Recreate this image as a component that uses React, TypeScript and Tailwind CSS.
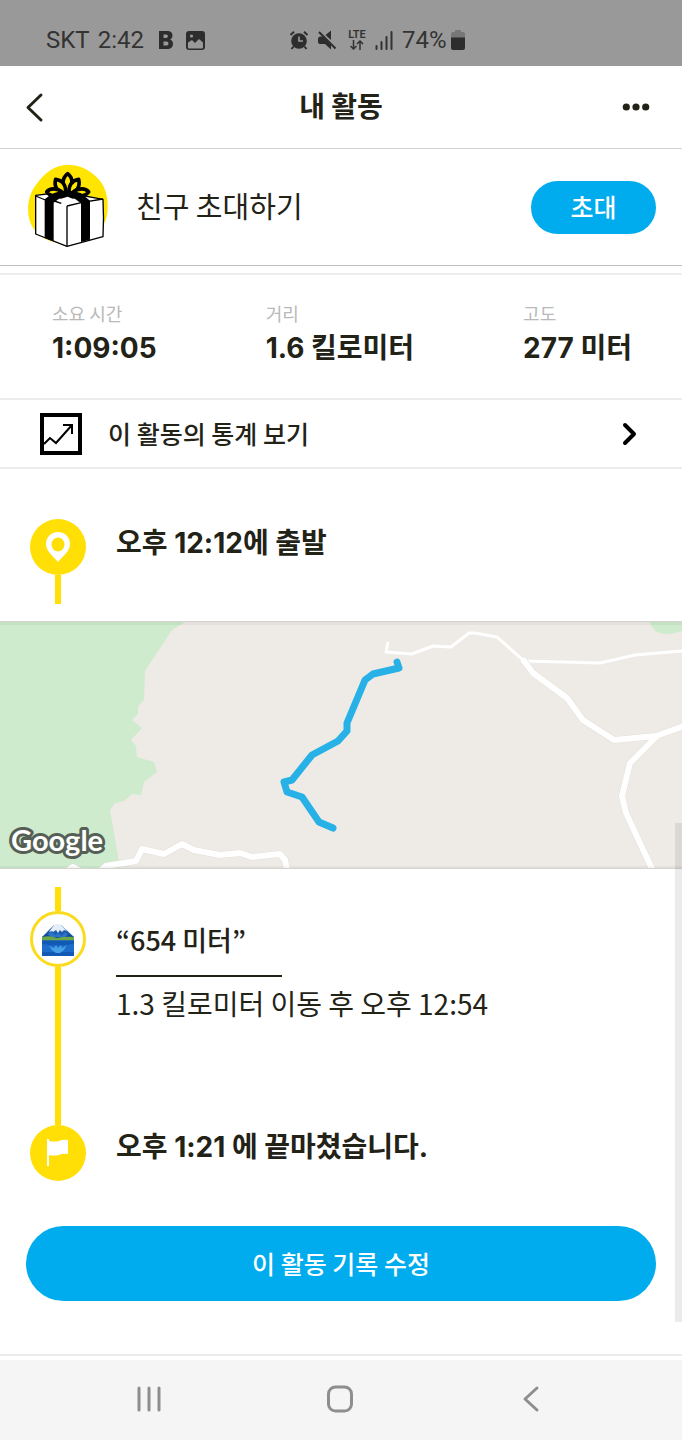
import type { ReactNode } from "react";

const stats = [
  { label: "소요 시간", value: "1:09:05" },
  { label: "거리", value: "1.6 킬로미터" },
  { label: "고도", value: "277 미터" },
];

const StatusBar = () => {
  return (
    <div className="flex h-[66px] items-center bg-[#999999] pt-[14px] pl-[46px] font-['Roboto',sans-serif] text-2xl text-[#333333]">
      <div className="flex w-[243px] items-center">
        <span>SKT</span>
        <span className="ml-2">2:42</span>
        <svg className="ml-[15px] h-[18px] w-[14px]" viewBox="0 0 14 18" aria-hidden="true">
          <path
            fill="#2d2d2d"
            fillRule="evenodd"
            d="M0 0h8.500c3.200 0 5 1.700 5 4.500 0 1.900-1 3.200-2.300 3.900 1.700.6 2.800 2.200 2.800 4.300 0 3.300-2.200 5.300-5.800 5.300H0zM4.500 3.500v3.400h2.700c2.300 0 2.300-3.400 0-3.400zM4.500 10.400v4h3.100c2.500 0 2.500-4 0-4z"
          />
        </svg>
        <svg className="ml-[13px] h-[19px] w-[19px]" viewBox="0 0 19 19" aria-hidden="true">
          <rect width="19" height="19" rx="3" fill="#2d2d2d" />
          <path
            fill="#999999"
            d="M2 11.500 6 9l3 3 4-4 4 3.500v5a1 1 0 0 1-1 1H3a1 1 0 0 1-1-1z"
          />
          <circle cx="5.500" cy="5" r="1.600" fill="#999999" />
        </svg>
      </div>
      <div className="flex items-center">
        <svg className="h-5 w-5" viewBox="0 0 20 20" aria-hidden="true">
          <circle cx="10" cy="11" r="7.800" fill="#2d2d2d" />
          <path
            d="M1.500 5 5 1.800M18.500 5 15 1.800M4.500 16.500 2.500 19M15.500 16.500l2 2.500"
            stroke="#2d2d2d"
            strokeWidth="2"
          />
          <path d="M10 6.500V11h4" fill="none" stroke="#999999" strokeWidth="1.700" />
        </svg>
        <svg className="ml-2 h-5 w-5" viewBox="0 0 20 20" aria-hidden="true">
          <path
            fill="#2d2d2d"
            d="M1 9c0-1.500 1-2.500 2.500-2.500H6l8 8.500v4.500L8 14H3a2 2 0 0 1-2-2zM8.500 5 14 .5V10z"
          />
          <path d="m2 2 16.500 16.500" stroke="#2d2d2d" strokeWidth="2" />
        </svg>
        <div className="ml-[10px] flex h-5 w-5 flex-col items-center text-[11px] leading-[10px] font-semibold">
          <span>LTE</span>
          <svg className="h-[10px] w-4" viewBox="0 0 16 10" aria-hidden="true">
            <path
              d="M4.500 0v9M1.500 6l3 3 3-3M11 10V1M8 4l3-3 3 3"
              fill="none"
              stroke="#333333"
              strokeWidth="1.500"
            />
          </svg>
        </div>
        <svg className="ml-[7px] h-5 w-5" viewBox="0 0 20 20" aria-hidden="true">
          <path
            d="M2.500 16v3M7.500 12v7M12.500 7v12M17.500 2v17"
            stroke="#333333"
            strokeWidth="2"
            strokeLinecap="round"
          />
        </svg>
        <span className="ml-2">74%</span>
        <svg className="ml-1 h-5 w-[14px]" viewBox="0 0 14 20" aria-hidden="true">
          <path
            fill="#777777"
            d="M4 0h6v2h2a2 2 0 0 1 2 2v4H0V4a2 2 0 0 1 2-2h2z"
          />
          <path fill="#2d2d2d" d="M0 7.500h14V18a2 2 0 0 1-2 2H2a2 2 0 0 1-2-2z" />
        </svg>
      </div>
    </div>
  );
};

const Header = () => {
  return (
    <header className="flex h-[83px] items-center justify-between border-b border-[#d2d2d2] pr-8 pl-6">
      <button type="button" aria-label="뒤로" className="w-8">
        <svg className="h-8 w-5" viewBox="0 0 20 32" aria-hidden="true">
          <path
            d="M17 4 4 16.500 17 29"
            fill="none"
            stroke="#232217"
            strokeWidth="3"
            strokeLinecap="round"
            strokeLinejoin="round"
          />
        </svg>
      </button>
      <h1 className="pb-1 pl-2 text-[28px] font-bold">내 활동</h1>
      <button type="button" aria-label="더 보기" className="flex w-8 justify-end">
        <svg className="h-8 w-8" viewBox="0 0 32 32" aria-hidden="true">
          <g fill="#232217">
            <circle cx="8.300" cy="16" r="3.600" />
            <circle cx="18" cy="16" r="3.600" />
            <circle cx="27.700" cy="16" r="3.600" />
          </g>
        </svg>
      </button>
    </header>
  );
};

const Gift = () => {
  return (
    <svg className="h-[85px] w-[83px]" viewBox="81 42 249 255" aria-hidden="true">
      <path
        fill="#ffe500"
        d="M206 44c38 1 72 20 95 50 20 26 26 65 20 100-6 42-45 84-115 86-68 2-108-29-119-76-7-36 0-71 20-98 25-37 60-63 99-62z"
      />
      <path
        fill="#fff"
        stroke="#000"
        strokeWidth="4"
        strokeLinejoin="round"
        d="m107 136 83-10 119 22c2 38 2 73 0 112l-108 29-94-37z"
      />
      <path
        d="M107 138 136 150M201 168l46-11 62-10M201 168v120"
        fill="none"
        stroke="#000"
        strokeWidth="4"
      />
      <path fill="#000" d="m134 148 24-18 30 8-27 20v116l-27-10z" />
      <path fill="#000" d="m213 138 30-8 27 22v117l-27 7V160z" />
      <path d="M163 153 184 160" fill="none" stroke="#000" strokeWidth="4" />
      <g fill="#ffe500" stroke="#000" strokeWidth="11" strokeLinejoin="round">
        <path d="M201 130c-17-23-15-46 2-59 17 13 18 36-2 59z" />
        <path d="M196 132c-24-5-35-22-29-44 22 3 33 19 29 44z" />
        <path d="M208 132c-4-25 7-41 28-44 5 22-5 38-28 44z" />
        <path d="M193 134c-22 9-43 5-53-8 12-15 40-11 53 8z" />
        <path d="M213 134c12-19 41-23 53-8-10 13-31 17-53 8z" />
      </g>
      <path d="M160 130q42-17 84 0l6 10-32 6-15-6-20 6-28-4z" />
    </svg>
  );
};

const InviteBanner = () => {
  return (
    <section className="flex h-[117px] items-center border-b border-[#bfbfbf] pr-[26px] pb-[2px] pl-[27px]">
      <Gift />
      <p className="ml-[26px] flex-1 text-[29px]">친구 초대하기</p>
      <button
        type="button"
        className="mt-[2px] h-[53px] w-[125px] rounded-full bg-[#00acee] pb-[2px] text-[25px] leading-[51px] font-medium text-white"
      >
        초대
      </button>
    </section>
  );
};

const RouteMap = () => {
  return (
    <figure aria-label="활동 경로 지도" className="border-y border-[#d5d3cd]">
      <svg
        className="block h-[246px] w-full"
        viewBox="0 622 682 246"
        preserveAspectRatio="xMidYMid slice"
      >
        <path fill="#eeebe6" d="M0 621h682v248H0z" />
        <path
          fill="#ceebcd"
          d="M0 621h187l-15 9-27 41-1 29-6 6v8l-6 6 10 8-11 12 5 6 1 11 17 5 3 10-13 10-3 13-9-1-8 7-9 2-5 7 9 52v7H0z"
        />
        <path fill="#ceebcd" d="M650 621q2 13 17 13 8 0 15-3v-10z" />
        <g fill="none" stroke="#fff" strokeLinejoin="round">
          <path
            strokeWidth="3"
            d="m388 642-2 10 26 2 21-8 18 1 18-14h6l22 4 27 24 76 2 35-8 47-4"
          />
          <g stroke="#e2dfd9" strokeWidth="7">
            <path d="m524 661 9 12 34 25 16 22 31 20 42-4 28-10M656 737l-26 26-8 33 4 17 28 60" />
            <path d="m99 872 7-6 30-5 6-12 22 5 18-10 12 6 26 5 20-2 12 4 28-3 5 6 3 14M66 872l7-5 9 5" />
          </g>
          <g strokeWidth="6" strokeLinecap="round">
            <path d="m524 661 9 12 34 25 16 22 31 20 42-4 28-10M656 737l-26 26-8 33 4 17 28 60" />
            <path d="m99 872 7-6 30-5 6-12 22 5 18-10 12 6 26 5 20-2 12 4 28-3 5 6 3 14M66 872l7-5 9 5" />
          </g>
        </g>
        <path fill="#000" fillOpacity="0.04" d="M0 622h682v3H0zM0 866h682v2H0z" />
        <path
          fill="none"
          stroke="#28b1e7"
          strokeWidth="7"
          strokeLinecap="round"
          strokeLinejoin="round"
          d="m397 662 2 6-26 6-8 6-18 43v8l-9 10-26 14-20 25-8 2 3 10 15 5 17 25 14 6"
        />
        <text
          x="11"
          y="851"
          fill="#fff"
          stroke="#555f55"
          strokeWidth="6"
          strokeLinejoin="round"
          paintOrder="stroke"
          className="font-['Lato',sans-serif] text-[29px] font-bold"
        >
          Google
        </text>
      </svg>
    </figure>
  );
};

const Stem = ({ className }: { className: string }) => {
  return <div className={`w-[6px] bg-[#ffdf06] ${className}`}></div>;
};

const Dot = ({ children }: { children: ReactNode }) => {
  return (
    <div className="flex h-14 w-14 items-center justify-center rounded-full bg-[#ffdf06]">
      {children}
    </div>
  );
};

const Mountain = () => {
  return (
    <svg className="mt-[2px] h-[32px] w-[32px]" viewBox="0 0 32 32" aria-hidden="true">
      <path fill="#1f5cae" d="M0 13 12 1h7l13 12v4H0z" />
      <path fill="#2a74c9" d="m9 7 4 4 3-2 4 3 3-4 5 5H4z" />
      <path fill="#e3eef8" d="M12 1q4-2 7 0l6 6-3-1-2 2-2-2-2 3-2-3-3 2-1-1-3 1z" />
      <path fill="#17459c" d="m0 13 5-3 4 3h14l4-3 5 3v3H0z" />
      <path fill="#6aa84a" d="M0 13q8-2 15 1 8-2 17-1v4H0z" />
      <path fill="#1d6cc9" d="M0 16.500h32V32H0z" />
      <path fill="#1258b5" d="M0 16.500h32v3q-16 4-32 0zM0 28h32v4H0z" />
      <path fill="#459fe6" d="m7 22 5 2 2-3 2 3 3-3 1 3 5-3-3 5-4 3h-4l-4-3z" />
    </svg>
  );
};

const Timeline = () => {
  return (
    <section className="flex gap-[30px] pt-[18px] pl-[30px]">
      <div className="flex flex-col items-center">
        <Stem className="h-6" />
        <div className="flex h-14 w-14 items-center justify-center rounded-full border-[3px] border-[#fadb1e] bg-white">
          <Mountain />
        </div>
        <Stem className="h-[158px]" />
        <Dot>
          <svg className="h-8 w-8" viewBox="0 0 32 32" aria-hidden="true">
            <path
              fill="#fff"
              d="M5 2h2v2q5 1 10 0 4-2 9-1v14q-5-1-9 1-5 1-10 0v11H5z"
            />
          </svg>
        </Dot>
      </div>
      <div className="flex flex-1 flex-col items-start">
        <div className="mt-[30px] h-[60px] w-[166px] border-b-2 border-[#232217] text-[27px] leading-[46px] font-medium whitespace-nowrap">
          “654 미터”
        </div>
        <p className="mt-[6px] text-[28px] leading-10">1.3 킬로미터 이동 후 오후 12:54</p>
        <h2 className="mt-[104px] font-['Inter','Noto_Sans_CJK_KR',sans-serif] text-[28px] leading-10 font-bold">
          오후 1:21 에 끝마쳤습니다.
        </h2>
      </div>
    </section>
  );
};

const NavigationBar = () => {
  return (
    <nav
      aria-label="시스템"
      className="flex h-20 items-center justify-between bg-[#f5f5f5] px-[133px] pb-[2px]"
    >
      <button type="button" aria-label="최근 앱">
        <svg className="h-8 w-8" viewBox="0 0 32 32" aria-hidden="true">
          <path
            d="M6 5v22M16 5v22M26 5v22"
            stroke="#8e8e8e"
            strokeWidth="3"
            strokeLinecap="round"
          />
        </svg>
      </button>
      <button type="button" aria-label="홈">
        <svg className="h-8 w-8" viewBox="0 0 32 32" aria-hidden="true">
          <rect
            x="3.500"
            y="4"
            width="23"
            height="24"
            rx="7"
            fill="none"
            stroke="#8e8e8e"
            strokeWidth="3"
          />
        </svg>
      </button>
      <button type="button" aria-label="뒤로 가기">
        <svg className="h-8 w-8" viewBox="0 0 32 32" aria-hidden="true">
          <path
            d="M20 5 8 16l12 11"
            fill="none"
            stroke="#8e8e8e"
            strokeWidth="3"
            strokeLinecap="round"
            strokeLinejoin="round"
          />
        </svg>
      </button>
    </nav>
  );
};

const App = () => {
  return (
    <div className="relative bg-white font-['Noto_Sans_CJK_KR',sans-serif] text-[#232217]">
      <StatusBar />
      <Header />
      <main>
        <InviteBanner />

        <dl className="mt-[7px] flex h-[127px] justify-between border-y-2 border-[#ececec] pt-[25px] pr-[50px] pl-[52px]">
          {stats.map((stat) => (
            <div key={stat.label}>
              <dt className="text-lg leading-[26px] text-[#b9b9b9]">{stat.label}</dt>
              <dd className="mt-[2px] font-['Inter','Noto_Sans_CJK_KR',sans-serif] text-[28px] leading-10 font-bold">
                {stat.value}
              </dd>
            </div>
          ))}
        </dl>

        <a
          href="#stats"
          className="flex h-[69px] items-center border-b-2 border-[#ececec] pr-11 pl-10"
        >
          <svg className="h-[42px] w-[42px]" viewBox="0 0 42 42" aria-hidden="true">
            <rect x="2" y="2" width="38" height="38" fill="#fff" stroke="#000" strokeWidth="4" />
            <path
              d="m4 31 6-6 6 5 16-18M23 12h9v9"
              fill="none"
              stroke="#000"
              strokeWidth="2"
            />
          </svg>
          <span className="ml-[26px] flex-1 text-[25px] font-medium">이 활동의 통계 보기</span>
          <svg className="h-6 w-4" viewBox="0 0 16 24" aria-hidden="true">
            <path
              d="m3 3 9 9-9 9"
              fill="none"
              stroke="#000"
              strokeWidth="4"
              strokeLinecap="round"
              strokeLinejoin="round"
            />
          </svg>
        </a>

        <section className="flex gap-[30px] pt-[50px] pb-[17px] pl-[30px]">
          <div className="flex flex-col items-center">
            <Dot>
              <svg className="h-8 w-8" viewBox="0 0 32 32" aria-hidden="true">
                <path
                  fill="#fff"
                  fillRule="evenodd"
                  d="M16 1C9 1 4 6 4 13c0 7 6 11 12 18 6-7 12-11 12-18 0-7-5-12-12-12zm0 5.500a6.500 7 0 1 1 0 14 6.500 7 0 0 1 0-14z"
                />
              </svg>
            </Dot>
            <Stem className="h-[29px]" />
          </div>
          <h2 className="mt-1 font-['Inter','Noto_Sans_CJK_KR',sans-serif] text-[28px] leading-10 font-bold">
            오후 12:12에 출발
          </h2>
        </section>

        <RouteMap />
        <Timeline />

        <div className="border-b-2 border-[#ececec] px-[26px] pt-[45px] pb-[53px]">
          <button
            type="button"
            className="h-[75px] w-full rounded-full bg-[#00acee] text-[25px] leading-[75px] font-medium text-white"
          >
            이 활동 기록 수정
          </button>
        </div>
      </main>
      <div className="h-1"></div>
      <NavigationBar />
      <div className="absolute top-[823px] right-0 h-[499px] w-[7px] bg-black/8"></div>
    </div>
  );
};

export default App;
